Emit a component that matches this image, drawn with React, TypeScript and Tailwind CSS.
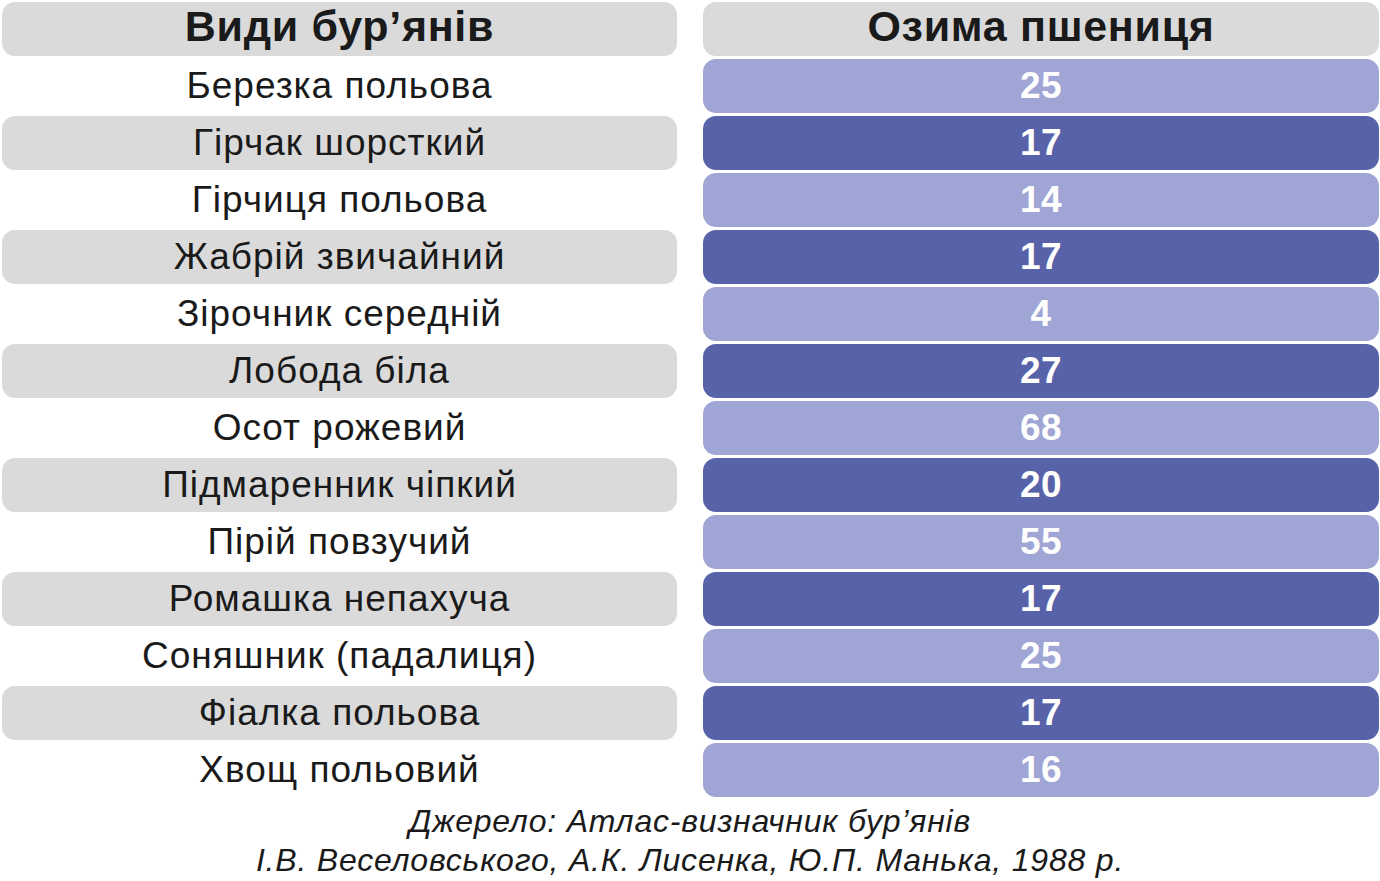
const rows: [string, number][] = [
  ["Березка польова", 25],
  ["Гірчак шорсткий", 17],
  ["Гірчиця польова", 14],
  ["Жабрій звичайний", 17],
  ["Зірочник середній", 4],
  ["Лобода біла", 27],
  ["Осот рожевий", 68],
  ["Підмаренник чіпкий", 20],
  ["Пірій повзучий", 55],
  ["Ромашка непахуча", 17],
  ["Соняшник (падалиця)", 25],
  ["Фіалка польова", 17],
  ["Хвощ польовий", 16],
]

export default function App() {
  return (
    <div className="w-[1380px] h-[881px] bg-white overflow-hidden font-['Liberation_Sans',Arial,sans-serif] text-[#1a1a1a]">
      <div className="grid grid-cols-[675px_676px] gap-x-[26px] gap-y-[3px] pl-[2px] pt-[2px]">
        <div className="h-[54px] pb-[5px] rounded-[13px] bg-[#dadada] flex items-center justify-center text-[43px] tracking-[0.7px] font-bold">
          Види бур’янів
        </div>
        <div className="h-[54px] pb-[5px] rounded-[13px] bg-[#dadada] flex items-center justify-center text-[43px] tracking-[0.7px] font-bold">
          Озима пшениця
        </div>
        {rows.map(([name, value], i) => (
          <>
            <div
              key={`n-${i}`}
              className={`h-[54px] rounded-[13px] flex items-center justify-center text-[37px] tracking-[1px] ${
                i % 2 === 1 ? "bg-[#dadada]" : ""
              }`}
            >
              {name}
            </div>
            <div
              key={`v-${i}`}
              className={`h-[54px] rounded-[13px] flex items-center justify-center text-[37px] tracking-[0.5px] font-bold text-white ${
                i % 2 === 1 ? "bg-[#5762a9]" : "bg-[#9fa5d5]"
              }`}
            >
              {value}
            </div>
          </>
        ))}
      </div>
      <div className="mt-[5px] text-center italic text-[32px] tracking-[0.8px] leading-[39px]">
        <div>Джерело: Атлас-визначник бур’янів</div>
        <div>І.В. Веселовського, А.К. Лисенка, Ю.П. Манька, 1988 р.</div>
      </div>
    </div>
  )
}
